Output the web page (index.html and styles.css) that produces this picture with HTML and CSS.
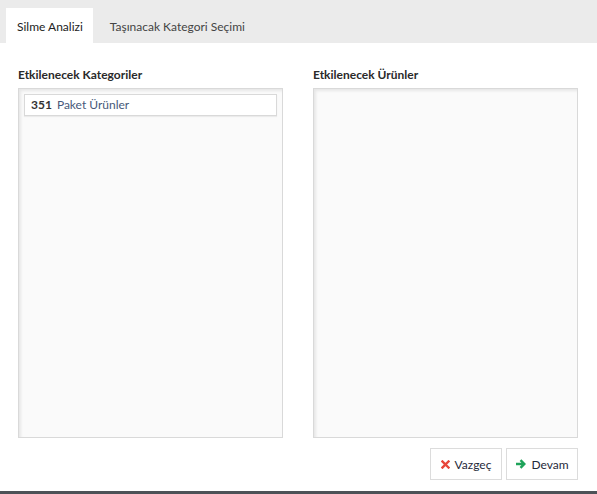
FILE: index.html
```html
<!DOCTYPE html>
<html lang="tr">
<head>
    <meta charset="UTF-8">
    <title>Kategori Silme</title>
    <link rel="stylesheet" href="styles.css">
</head>
<body>
    <div class="tabs">
        <div class="tab active">Silme Analizi</div>
        <div class="tab">Taşınacak Kategori Seçimi</div>
    </div>

    <div class="content">
        <div class="columns">
            <div class="column">
                <h4>Etkilenecek Kategoriler</h4>
                <div class="list-box">
                    <div class="list-item"><b>351</b><span>Paket Ürünler</span></div>
                </div>
            </div>
            <div class="column">
                <h4>Etkilenecek Ürünler</h4>
                <div class="list-box"></div>
            </div>
        </div>

        <div class="actions">
            <button class="btn">
                <svg width="9" height="9" viewBox="0 0 9 9"><path d="M1.5 1.5 L7.5 7.5 M7.5 1.5 L1.5 7.5" stroke="#e8463a" stroke-width="2.4" stroke-linecap="square"/></svg>
                Vazgeç
            </button>
            <button class="btn">
                <svg width="11" height="10" viewBox="0 0 11 10"><path d="M1 5 H9 M5.5 1.2 L9.3 5 L5.5 8.8" stroke="#1ea35a" stroke-width="2.4" fill="none"/></svg>
                Devam
            </button>
        </div>
    </div>
    <div class="footer-line"></div>
</body>
</html>
```

FILE: styles.css
```css
body {
    font-family: Lato, 'Open Sans', sans-serif;
    margin: 0;
    height: 494px;
    background: #ffffff;
    color: #222;
    font-size: 12px;
    display: flex;
    flex-direction: column;
}
.tabs {
    display: flex;
    align-items: flex-end;
    gap: 6px;
    background: #ebebeb;
    height: 43px;
    padding-left: 6px;
}
.tab {
    padding: 0 11px;
    height: 35px;
    line-height: 38px;
    color: #444;
}
.tab.active {
    background: #ffffff;
    color: #222;
    margin-bottom: -1px;
    height: 36px;
    padding: 0 10px 0 11px;
}
.content {
    flex: 1;
    padding: 0 19px 0 18px;
    display: flex;
    flex-direction: column;
}
.columns {
    display: grid;
    grid-template-columns: 265px 265px;
    column-gap: 30px;
}
.column h4 {
    margin: 24px 0 6px;
    font-size: 12px;
    font-weight: bold;
    color: #2a2a2a;
    line-height: 15px;
}
.list-box {
    box-sizing: border-box;
    height: 350px;
    background: #fafafa;
    border: 1px solid #d9d9d9;
    box-shadow: inset 2px 2px 3px rgba(0, 0, 0, 0.08);
    padding: 5px;
}
.list-item {
    background: #ffffff;
    border: 1px solid #d9d9d9;
    box-shadow: 0 1px 1px rgba(0, 0, 0, 0.06);
    height: 20px;
    line-height: 20px;
    padding: 0 6px;
}
.list-item b {
    color: #333;
    margin-right: 5px;
}
.list-item span {
    color: #47597a;
}
.actions {
    display: flex;
    justify-content: flex-end;
    gap: 4px;
    margin-top: 10px;
}
.btn {
    font-family: inherit;
    font-size: 12px;
    color: #1f2a3a;
    background: #ffffff;
    border: 1px solid #dcdcdc;
    height: 32px;
    width: 72px;
    display: flex;
    align-items: center;
    justify-content: center;
    gap: 5px;
    padding: 0;
}
.footer-line {
    height: 3px;
    background: #4d5257;
}
```
